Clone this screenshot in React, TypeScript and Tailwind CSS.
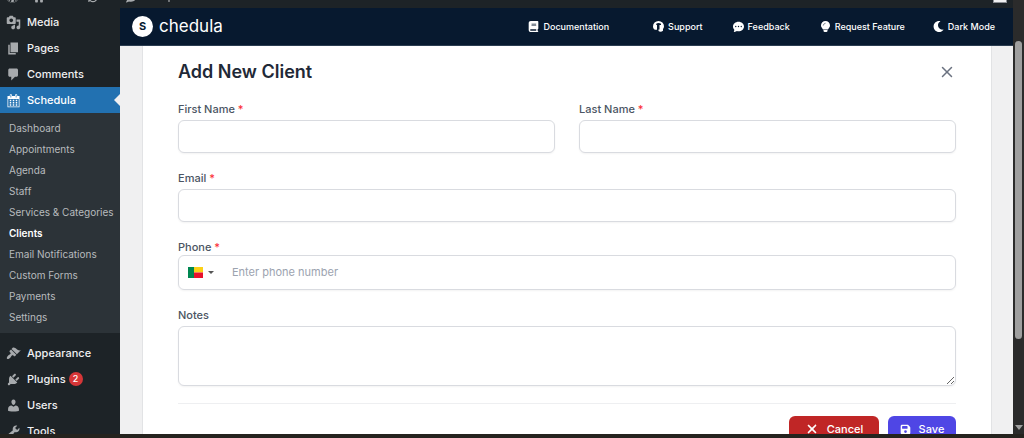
import React from 'react';
import { FaMoon } from 'react-icons/fa';
import { FaArrowsRotate, FaBook, FaComment, FaFloppyDisk, FaHouse, FaPlus, FaWordpress, FaXmark } from 'react-icons/fa6';
import { BsChatDotsFill } from 'react-icons/bs';
import { X } from 'lucide-react';

const dashicons = {
  media:
    'M13 11V4c0-.55-.45-1-1-1h-1.67L9 1H5L3.67 3H2c-.55 0-1 .45-1 1v7c0 .55.45 1 1 1h10c.55 0 1-.45 1-1zM7 4.5c1.38 0 2.5 1.12 2.5 2.5S8.38 9.5 7 9.5 4.5 8.38 4.5 7 5.62 4.5 7 4.5zM14 6h5v10.5c0 1.38-1.12 2.5-2.5 2.5S14 17.88 14 16.5s1.12-2.5 2.5-2.5c.17 0 .34.02.5.05V9h-3V6zm-4 8.05V13h2v3.5c0 1.38-1.12 2.5-2.5 2.5S7 17.88 7 16.5 8.12 14 9.5 14c.17 0 .34.02.5.05z',
  pages: 'M6 15V2h10v13H6zm-1 1h8v2H3V5h2v11z',
  comments: 'M5 2h9c1.1 0 2 .9 2 2v7c0 1.1-.9 2-2 2h-2l-5 5v-5H5c-1.1 0-2-.9-2-2V4c0-1.1.9-2 2-2z',
  calendar:
    'M15 4h3v15H2V4h3V3c0-.41.15-.76.44-1.06.29-.29.65-.44 1.06-.44s.77.15 1.06.44c.29.3.44.65.44 1.06v1h4V3c0-.41.15-.76.44-1.06.29-.29.65-.44 1.06-.44s.77.15 1.06.44c.29.3.44.65.44 1.06v1zM6 3v2.5c0 .14.05.26.15.36.09.09.21.14.35.14s.26-.05.35-.14c.1-.1.15-.22.15-.36V3c0-.14-.05-.26-.15-.35-.09-.1-.21-.15-.35-.15s-.26.05-.35.15c-.1.09-.15.21-.15.35zm7 0v2.5c0 .14.05.26.14.36.1.09.22.14.36.14s.26-.05.36-.14c.09-.1.14-.22.14-.36V3c0-.14-.05-.26-.14-.35-.1-.1-.22-.15-.36-.15s-.26.05-.36.15c-.09.09-.14.21-.14.35zm4 15V8H3v10h14zM7 9v2H5V9h2zm2 0h2v2H9V9zm4 2V9h2v2h-2zm-6 1v2H5v-2h2zm2 0h2v2H9v-2zm4 2v-2h2v2h-2zm-6 1v2H5v-2h2zm4 2H9v-2h2v2zm4 0h-2v-2h2v2z',
  appearance:
    'M14.48 11.06L7.41 3.99l1.5-1.5c.5-.56 2.3-.47 3.51.32 1.21.8 1.43 1.28 2.91 2.1 1.18.64 2.45 1.26 4.45.85zm-.71.71L6.7 4.7 4.93 6.47c-.39.39-.39 1.02 0 1.41l1.06 1.06c.39.39.39 1.03 0 1.42-.6.6-1.43 1.11-2.21 1.69-.35.26-.7.53-1.01.84C1.43 14.23.4 16.08 1.4 17.07c.99 1 2.84-.03 4.18-1.36.31-.31.58-.66.85-1.02.57-.78 1.08-1.61 1.69-2.21.39-.39 1.02-.39 1.41 0l1.06 1.06c.39.39 1.02.39 1.41 0z',
  plugins:
    'M13.11 4.36L9.87 7.6 8 5.73l3.24-3.24c.35-.34 1.05-.2 1.56.32.52.51.66 1.21.31 1.55zm-8 1.77l.91-1.12 9.01 9.01-1.19.84c-.71.71-2.63 1.16-3.82 1.16H6.14L4.9 17.26c-.59.59-1.54.59-2.12 0-.59-.58-.59-1.53 0-2.12l1.24-1.24v-3.88c0-1.13.4-3.19 1.09-3.89zm7.26 3.97l3.24-3.24c.34-.35 1.04-.21 1.55.31.52.51.66 1.21.31 1.55l-3.24 3.25z',
  users:
    'M10 9.25c-2.27 0-2.73-3.44-2.73-3.44C7 4.02 7.82 2 9.97 2c2.16 0 2.98 2.02 2.71 3.81 0 0-.41 3.44-2.68 3.44zm0 2.57L12.72 10c2.39 0 4.52 2.33 4.52 4.53v2.49s-3.65 1.13-7.24 1.13c-3.65 0-7.24-1.13-7.24-1.13v-2.49c0-2.25 1.94-4.48 4.47-4.48z',
  tools:
    'M16.68 9.77c-1.34 1.34-3.3 1.67-4.95.99l-5.41 6.52c-.99.99-2.59.99-3.58 0s-.99-2.59 0-3.57l6.52-5.42c-.68-1.65-.35-3.61.99-4.95 1.28-1.28 3.12-1.62 4.72-1.06l-2.89 2.89 2.82 2.82 2.86-2.87c.53 1.58.18 3.39-1.08 4.65zM3.81 16.21c.4.39 1.04.39 1.43 0 .4-.4.4-1.04 0-1.43-.39-.4-1.03-.4-1.43 0-.39.39-.39 1.03 0 1.43z',
};

interface MenuItemProps {
  icon: keyof typeof dashicons;
  label: string;
  active?: boolean;
  badge?: number;
}

const MenuItem: React.FC<MenuItemProps> = ({ icon, label, active, badge }) => (
  <li>
    <a
      href="#"
      className={`relative flex h-[26px] items-center pl-1.5 text-[11px] font-medium ${
        active ? 'bg-[#2271b1] text-white' : 'text-[#f0f0f1]'
      }`}
    >
      <svg viewBox="0 0 20 20" className={`mr-1.5 size-[15px] ${active ? 'fill-white' : 'fill-[#a7aaad]'}`}>
        <path d={dashicons[icon]} />
      </svg>
      {label}
      {badge && (
        <span className="ml-[3px] flex size-3.5 items-center justify-center rounded-full bg-[#d63638] text-[9px] text-white">
          {badge}
        </span>
      )}
      {active && (
        <span className="absolute right-0 border-y-[6px] border-r-[6px] border-y-transparent border-r-[#f0f0f1]" />
      )}
    </a>
  </li>
);

const submenu = [
  'Dashboard',
  'Appointments',
  'Agenda',
  'Staff',
  'Services & Categories',
  'Clients',
  'Email Notifications',
  'Custom Forms',
  'Payments',
  'Settings',
];

const Sidebar: React.FC = () => (
  <nav className="w-[120px] shrink-0 overflow-hidden bg-[#1d2327] pt-px">
    <ul>
      <MenuItem icon="media" label="Media" />
      <MenuItem icon="pages" label="Pages" />
      <MenuItem icon="comments" label="Comments" />
      <MenuItem icon="calendar" label="Schedula" active />
    </ul>
    <ul className="mb-[7px] bg-[#2c3338] py-[5px]">
      {submenu.map((item) => (
        <li key={item}>
          <a
            href="#"
            className={`block pl-[9px] text-[10px] leading-[21px] whitespace-nowrap ${
              item === 'Clients' ? 'font-semibold text-white' : 'text-[#b8bbbe]'
            }`}
          >
            {item}
          </a>
        </li>
      ))}
    </ul>
    <ul>
      <MenuItem icon="appearance" label="Appearance" />
      <MenuItem icon="plugins" label="Plugins" badge={2} />
      <MenuItem icon="users" label="Users" />
      <MenuItem icon="tools" label="Tools" />
    </ul>
  </nav>
);

const AdminBar: React.FC = () => (
  <div className="flex h-2 shrink-0 items-end overflow-hidden bg-[#1d2327] px-1.5 pb-[5px] text-[#a7aaad]">
    <FaWordpress className="size-[13px] shrink-0" />
    <FaHouse className="ml-[15px] size-[10px] shrink-0" />
    <FaArrowsRotate className="ml-11 size-[10px] shrink-0" />
    <FaComment className="ml-7 size-[10px] shrink-0" />
    <FaPlus className="ml-7 size-[10px] shrink-0" />
    <span className="ml-auto size-3.5 shrink-0 border border-[#8c8f94] bg-[#f0f0f1]" />
  </div>
);

const SupportIcon: React.FC = () => (
  <svg viewBox="0 0 22 22" className="size-[11px]">
    <path
      fill="currentColor"
      d="M11 0A11 11 0 0 0 0 11c0 3 1.5 5.5 4 6.5h4V8H6.5V5.5C9 3.5 13 3.5 16 5.5V8h-3v9h-2v3c2 2 6 2.500 9-.5V16c1.300-1.500 2-3.500 2-5.500A11 10.500 0 0 0 11 0z"
    />
  </svg>
);

const BulbIcon: React.FC = () => (
  <svg viewBox="0 0 22 22" className="size-[11px]">
    <path
      fill="currentColor"
      d="M11 0a9 9 0 0 0-9 9c0 3.500 2.500 5 4 8h10c1.500-3 4-4.500 4-8a9 9 0 0 0-9-9zM7 18v1.500A2.500 2.500 0 0 0 9.500 22h3a2.500 2.500 0 0 0 2.500-2.500V18z"
    />
    <path fill="none" stroke="#07192f" strokeWidth="1" strokeLinecap="round" d="M6.5 8.5A4.500 4.500 0 0 1 10.500 4.500" />
  </svg>
);

const Header: React.FC = () => (
  <header className="z-10 flex h-[38px] shrink-0 items-center justify-between border-b border-[#2b3d51] bg-[#07192f] pr-[18px] pl-3 text-white">
    <div className="flex items-center gap-1.5">
      <span className="flex size-[21px] items-center justify-center rounded-full bg-white text-[11px] font-bold text-[#07192f]">
        S
      </span>
      <span className="text-[17px]">chedula</span>
    </div>
    <nav className="flex items-center text-[9px] font-medium">
      <a href="#" className="mr-11 flex items-center gap-1">
        <FaBook className="size-[11px]" />
        Documentation
      </a>
      <a href="#" className="mr-[30px] flex items-center gap-1">
        <SupportIcon />
        Support
      </a>
      <a href="#" className="mr-[30px] flex items-center gap-1">
        <BsChatDotsFill className="size-[11px]" />
        Feedback
      </a>
      <a href="#" className="mr-7 flex items-center gap-1">
        <BulbIcon />
        Request Feature
      </a>
      <button type="button" className="flex items-center gap-1">
        <FaMoon className="size-[11px]" />
        Dark Mode
      </button>
    </nav>
  </header>
);

const labelStyle = 'block text-[11px] leading-4 font-medium text-[#4b5563]';
const inputStyle = 'block w-full rounded-md border border-[#d9dbe0] bg-white px-2 text-[11px] shadow-xs outline-none';

const Required: React.FC = () => <span className="text-red-500">*</span>;

const ClientForm: React.FC = () => (
  <form className="mr-[21px] ml-[22px] border-x border-[#e2e3e5] bg-white px-[35px]">
    <div className="flex h-[52px] items-center justify-between">
      <h1 className="text-lg font-semibold text-[#1f2937]">Add New Client</h1>
      <button type="button" aria-label="Close" className="text-[#6b7280]">
        <X className="size-[18px]" strokeWidth={2} />
      </button>
    </div>

    <div className="mt-[3px] grid grid-cols-2 gap-6">
      <div>
        <label htmlFor="first-name" className={labelStyle}>
          First Name <Required />
        </label>
        <input id="first-name" type="text" className={`${inputStyle} mt-[3px] h-[33px]`} />
      </div>
      <div>
        <label htmlFor="last-name" className={labelStyle}>
          Last Name <Required />
        </label>
        <input id="last-name" type="text" className={`${inputStyle} mt-[3px] h-[33px]`} />
      </div>
    </div>

    <div className="mt-[17px]">
      <label htmlFor="email" className={labelStyle}>
        Email <Required />
      </label>
      <input id="email" type="email" className={`${inputStyle} mt-[3px] h-[33px]`} />
    </div>

    <div className="mt-[17px]">
      <label htmlFor="phone" className={labelStyle}>
        Phone <Required />
      </label>
      <div className="flex h-[35px] items-center rounded-md border border-[#d9dbe0] pl-[9px] shadow-xs">
        <button type="button" aria-label="Country" className="flex items-center gap-[5px]">
          <svg viewBox="0 0 15 11" className="h-[11px] w-[15px]">
            <path fill="#008751" d="M0 0h6v11H0z" />
            <path fill="#fcd116" d="M6 0h9v5.5H6z" />
            <path fill="#e8112d" d="M6 5.5h9V11H6z" />
          </svg>
          <span className="border-x-[3px] border-t-[3px] border-x-transparent border-t-[#555555]" />
        </button>
        <input
          id="phone"
          type="tel"
          placeholder="Enter phone number"
          className="ml-[18px] min-w-0 flex-1 text-[11px] outline-none placeholder:text-[#9ca3af]"
        />
      </div>
    </div>

    <div className="mt-[17px]">
      <label htmlFor="notes" className={labelStyle}>
        Notes
      </label>
      <textarea id="notes" className={`${inputStyle} mt-[3px] h-[60px] resize-y`} />
    </div>

    <div className="mt-[17px] flex justify-end gap-[9px] border-t border-[#eeeff1] pt-3">
      <button
        type="button"
        className="flex h-[26px] w-[90px] items-center justify-center gap-2 rounded-md bg-[#c02626] text-[11px] font-medium text-white"
      >
        <FaXmark className="size-3.5" />
        Cancel
      </button>
      <button
        type="submit"
        className="flex h-[26px] w-[68px] items-center justify-center gap-2 rounded-md bg-[#4f46e5] text-[11px] font-medium text-white"
      >
        <FaFloppyDisk className="size-[11px]" />
        Save
      </button>
    </div>
  </form>
);

const ScrollBar: React.FC = () => (
  <div className="flex w-[11px] shrink-0 flex-col items-center bg-[#2b2b2b] pt-[41px]">
    <div className="h-[298px] w-[7px] rounded-full bg-[#9f9f9f]" />
    <span className="mt-auto mb-1 border-x-4 border-t-[5px] border-x-transparent border-t-[#9f9f9f]" />
  </div>
);

export default function App() {
  return (
    <div className="flex h-screen flex-col overflow-hidden border-b-4 border-[#25231e] bg-[#f0f0f1] font-['Inter',sans-serif]">
      <div className="flex min-h-0 flex-1">
        <div className="flex min-w-0 flex-1 flex-col">
          <AdminBar />
          <div className="flex min-h-0 flex-1">
            <Sidebar />
            <main className="flex min-w-0 flex-1 flex-col overflow-hidden">
              <Header />
              <ClientForm />
            </main>
          </div>
        </div>
        <ScrollBar />
      </div>
    </div>
  );
}
